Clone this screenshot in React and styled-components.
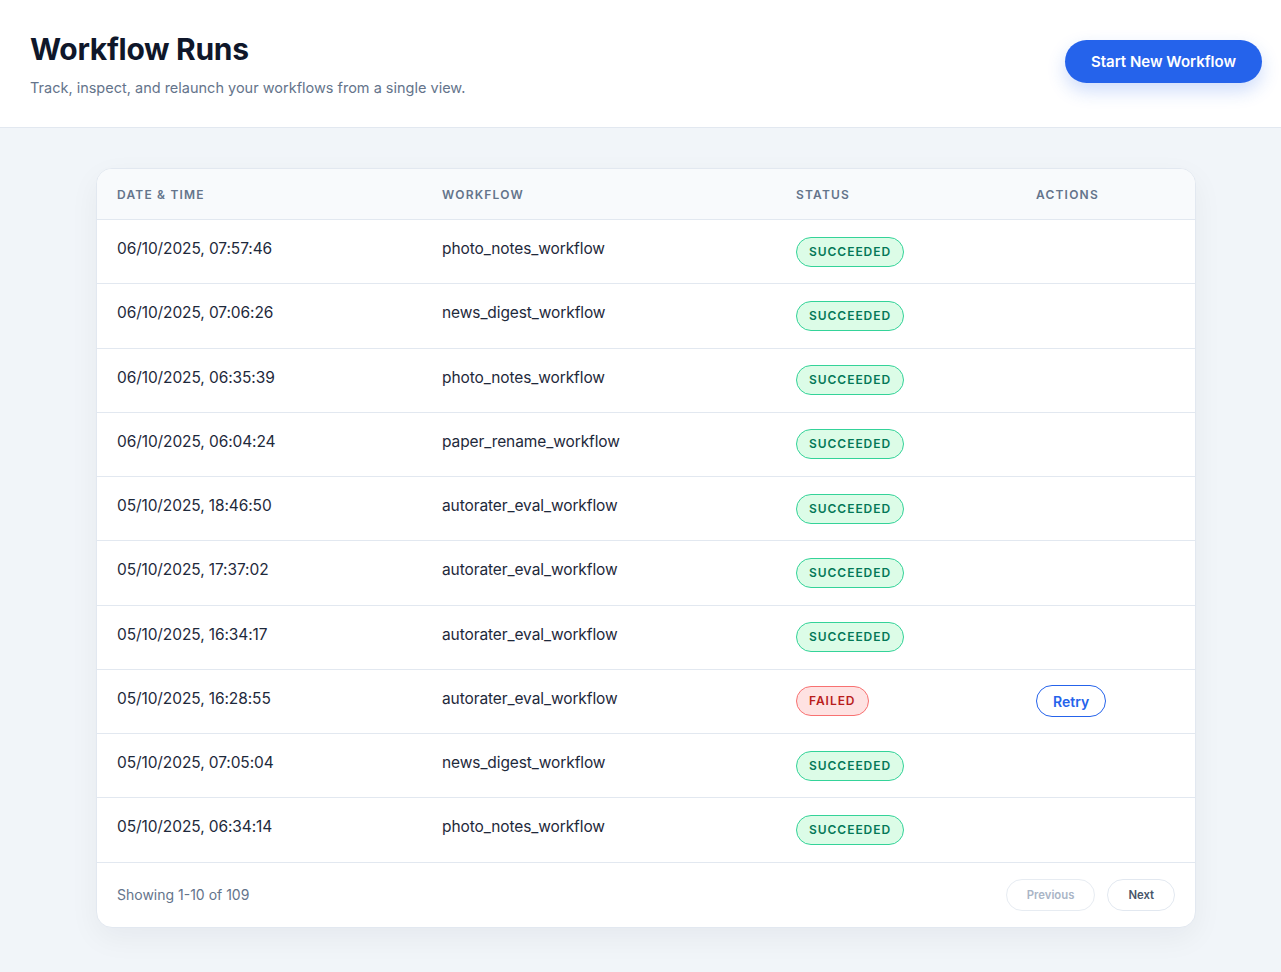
import React from "react";
import styled, { createGlobalStyle } from "styled-components";

const GlobalStyle = createGlobalStyle`
  * { box-sizing: border-box; }
  body {
    margin: 0;
    background: #f1f5f9;
    font-family: Inter, "Noto Sans", sans-serif;
    color: #1e293b;
  }
`;

const runs = [
  { time: "06/10/2025, 07:57:46", name: "photo_notes_workflow", status: "SUCCEEDED" },
  { time: "06/10/2025, 07:06:26", name: "news_digest_workflow", status: "SUCCEEDED" },
  { time: "06/10/2025, 06:35:39", name: "photo_notes_workflow", status: "SUCCEEDED" },
  { time: "06/10/2025, 06:04:24", name: "paper_rename_workflow", status: "SUCCEEDED" },
  { time: "05/10/2025, 18:46:50", name: "autorater_eval_workflow", status: "SUCCEEDED" },
  { time: "05/10/2025, 17:37:02", name: "autorater_eval_workflow", status: "SUCCEEDED" },
  { time: "05/10/2025, 16:34:17", name: "autorater_eval_workflow", status: "SUCCEEDED" },
  { time: "05/10/2025, 16:28:55", name: "autorater_eval_workflow", status: "FAILED" },
  { time: "05/10/2025, 07:05:04", name: "news_digest_workflow", status: "SUCCEEDED" },
  { time: "05/10/2025, 06:34:14", name: "photo_notes_workflow", status: "SUCCEEDED" }
];

export default function App() {
  return (
    <>
      <GlobalStyle />
      <Header>
        <div>
          <Title>Workflow Runs</Title>
          <Subtitle>Track, inspect, and relaunch your workflows from a single view.</Subtitle>
        </div>
        <PrimaryButton>Start New Workflow</PrimaryButton>
      </Header>
      <Main>
        <Card>
          <HeadRow>
            <HeadCell>Date &amp; Time</HeadCell>
            <HeadCell>Workflow</HeadCell>
            <HeadCell>Status</HeadCell>
            <HeadCell>Actions</HeadCell>
          </HeadRow>
          {runs.map((run, i) => (
            <Row key={i}>
              <Cell>{run.time}</Cell>
              <Cell>{run.name}</Cell>
              <Cell>
                <Badge $failed={run.status === "FAILED"}>{run.status}</Badge>
              </Cell>
              <Cell>{run.status === "FAILED" && <RetryButton>Retry</RetryButton>}</Cell>
            </Row>
          ))}
          <Footer>
            <Showing>Showing 1-10 of 109</Showing>
            <Pager>
              <PageButton disabled>Previous</PageButton>
              <PageButton>Next</PageButton>
            </Pager>
          </Footer>
        </Card>
      </Main>
    </>
  );
}

const Header = styled.header`
  height: 128px;
  background: #ffffff;
  border-bottom: 1px solid #e2e8f0;
  display: flex;
  align-items: flex-start;
  justify-content: space-between;
  padding: 31px 19px 0 30px;
`;

const Title = styled.h1`
  margin: 0;
  font-size: 30px;
  line-height: 36px;
  font-weight: 700;
  color: #0f172a;
  letter-spacing: -0.01em;
`;

const Subtitle = styled.p`
  margin: 10px 0 0;
  font-size: 14.5px;
  line-height: 22px;
  color: #64748b;
`;

const PrimaryButton = styled.button`
  margin-top: 9px;
  height: 43px;
  padding: 0 26px;
  border: none;
  border-radius: 999px;
  background: #2563eb;
  color: #ffffff;
  font-family: inherit;
  font-size: 15px;
  font-weight: 600;
  box-shadow: 0 8px 18px rgba(37, 99, 235, 0.22);
  cursor: pointer;
`;

const Main = styled.main`
  padding: 40px 85px 40px 96px;
`;

const Card = styled.section`
  background: #ffffff;
  border: 1px solid #e2e8f0;
  border-radius: 16px;
  overflow: hidden;
  box-shadow: 0 10px 30px rgba(15, 23, 42, 0.05);
`;

const Grid = styled.div`
  display: grid;
  grid-template-columns: 325px 354px 240px 1fr;
  align-items: center;
  border-bottom: 1px solid #e2e8f0;
`;

const HeadRow = styled(Grid)`
  height: 51px;
  background: #f8fafc;
`;

const HeadCell = styled.div`
  padding: 0 20px;
  font-size: 12px;
  font-weight: 600;
  letter-spacing: 0.1em;
  text-transform: uppercase;
  color: #64748b;
`;

const Row = styled(Grid)`
  height: 64.25px;
`;

const Cell = styled.div`
  padding: 0 20px;
  font-size: 15.5px;
  letter-spacing: -0.1px;
  line-height: 24px;
  color: #1e293b;
  margin-top: -5px;
  &:nth-child(n + 3) { margin-top: 0; }
`;

const Badge = styled.span`
  display: inline-flex;
  align-items: center;
  height: 30px;
  padding: 0 12px;
  border-radius: 999px;
  border: 1px solid ${(p) => (p.$failed ? "#f87171" : "#34d399")};
  background: ${(p) => (p.$failed ? "#fee2e2" : "#dcfce7")};
  color: ${(p) => (p.$failed ? "#b91c1c" : "#047857")};
  font-size: 12px;
  font-weight: 600;
  letter-spacing: 0.08em;
`;

const RetryButton = styled.button`
  height: 32px;
  padding: 0 16px;
  border: 1px solid #2563eb;
  border-radius: 999px;
  background: #ffffff;
  color: #2563eb;
  font-family: inherit;
  font-size: 14px;
  font-weight: 600;
  cursor: pointer;
`;

const Footer = styled.div`
  height: 64px;
  display: flex;
  align-items: center;
  justify-content: space-between;
  padding: 0 20px;
`;

const Showing = styled.span`
  font-size: 14px;
  color: #64748b;
`;

const Pager = styled.div`
  display: flex;
  gap: 12px;
`;

const PageButton = styled.button`
  height: 32px;
  padding: 0 20px;
  border: 1px solid #e2e8f0;
  border-radius: 999px;
  background: #ffffff;
  color: ${(p) => (p.disabled ? "#94a3b8" : "#475569")};
  font-family: inherit;
  font-size: 11.3px;
  font-weight: 600;
  opacity: ${(p) => (p.disabled ? 0.8 : 1)};
`;
